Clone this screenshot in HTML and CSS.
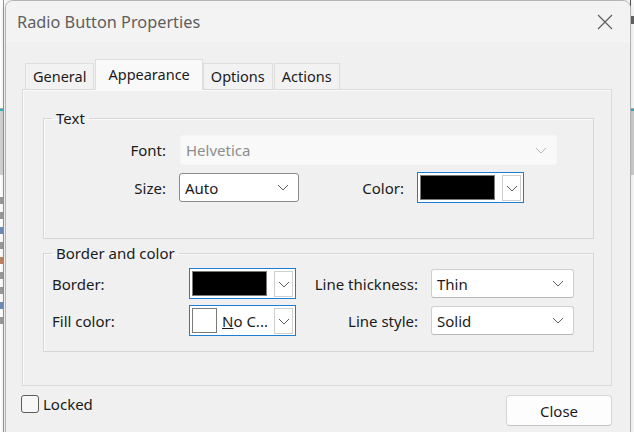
FILE: index.html
```html
<!DOCTYPE html>
<html lang="en">
  <head>
    <meta charset="UTF-8" />
    <meta name="viewport" content="width=device-width, initial-scale=1.0" />
    <title>Radio Button Properties</title>
    <link rel="stylesheet" href="styles.css">
  </head>
  <body>
    <!-- 背后的应用窗口，只露出两条边 -->
    <div class="desk">
      <div class="desk-left">
        <div class="desk-band"></div>
        <div class="desk-bits">
          <i></i><i></i><i class="blue"></i><i></i><i class="red"></i><i></i><i></i><i class="blue"></i><i></i>
        </div>
      </div>
      <div class="desk-right">
        <i class="desk-p"></i>
        <div class="desk-band"></div>
      </div>
    </div>

    <div class="dialog">
      <div class="titlebar">
        <span class="title">Radio Button Properties</span>
        <button class="close-x" aria-label="Close">
          <svg width="16" height="16" viewBox="0 0 16 16"><path d="M1 1L15 15M15 1L1 15" stroke="#5a5a5a" stroke-width="1.1" fill="none"/></svg>
        </button>
      </div>

      <div class="body">
        <div class="tabs">
          <div class="tab">General</div>
          <div class="tab active">Appearance</div>
          <div class="tab">Options</div>
          <div class="tab">Actions</div>
        </div>

        <div class="panel">
          <fieldset class="group group-text">
            <legend>Text</legend>
            <div class="text-grid">
              <span class="lbl right">Font:</span>
              <div class="select disabled wide">
                <span>Helvetica</span>
                <svg class="chev" width="12" height="7" viewBox="0 0 12 7"><polyline points="1,1 6,6 11,1" /></svg>
              </div>

              <span class="lbl right">Size:</span>
              <div class="select dark">
                <span>Auto</span>
                <svg class="chev" width="12" height="7" viewBox="0 0 12 7"><polyline points="1,1 6,6 11,1" /></svg>
              </div>
              <span class="lbl right">Color:</span>
              <div class="swatch">
                <span class="swatch-color"></span>
                <span class="swatch-drop">
                  <svg class="chev" width="12" height="7" viewBox="0 0 12 7"><polyline points="1,1 6,6 11,1" /></svg>
                </span>
              </div>
            </div>
          </fieldset>

          <fieldset class="group group-border">
            <legend>Border and color</legend>
            <div class="border-grid">
              <span class="lbl">Border:</span>
              <div class="swatch">
                <span class="swatch-color"></span>
                <span class="swatch-drop">
                  <svg class="chev" width="12" height="7" viewBox="0 0 12 7"><polyline points="1,1 6,6 11,1" /></svg>
                </span>
              </div>
              <span class="lbl right">Line thickness:</span>
              <div class="select">
                <span>Thin</span>
                <svg class="chev" width="12" height="7" viewBox="0 0 12 7"><polyline points="1,1 6,6 11,1" /></svg>
              </div>

              <span class="lbl">Fill color:</span>
              <div class="swatch">
                <span class="swatch-none"></span>
                <span class="swatch-text"><u>N</u>o C...</span>
                <span class="swatch-drop">
                  <svg class="chev" width="12" height="7" viewBox="0 0 12 7"><polyline points="1,1 6,6 11,1" /></svg>
                </span>
              </div>
              <span class="lbl right">Line style:</span>
              <div class="select">
                <span>Solid</span>
                <svg class="chev" width="12" height="7" viewBox="0 0 12 7"><polyline points="1,1 6,6 11,1" /></svg>
              </div>
            </div>
          </fieldset>
        </div>

        <div class="footer">
          <label class="check"><span class="box"></span>Locked</label>
          <button class="btn">Close</button>
        </div>
      </div>
    </div>
  </body>
</html>
```

FILE: styles.css
```css
body {
  margin: 0;
  width: 634px;
  height: 432px;
  overflow: hidden;
  position: relative;
  background-color: #ffffff;
  font-family: "Noto Sans", "Open Sans", sans-serif;
  font-size: 15px;
  color: #1b1b1b;
}

/* 背景窗口 */
.desk {
  display: flex;
  justify-content: space-between;
  height: 432px;
}
.desk-left,
.desk-right {
  height: 100%;
  overflow: hidden;
}
.desk-left {
  width: 3px;
  border-right: 1px solid #9a9a9a;
}
.desk-band {
  height: 66px;
  margin-top: 108px;
  background-color: #d2d2d2;
  border-top: 1px solid #b0b0b0;
  box-shadow: inset 0 25px 0 -23px #2bb5c0;
}
.desk-bits {
  display: flex;
  flex-direction: column;
  gap: 8px;
  margin-top: 22px;
}
.desk-bits i {
  display: block;
  width: 3px;
  height: 7px;
  background-color: #9a9a9a;
}
.desk-bits i.blue {
  background-color: #6f8cba;
}
.desk-bits i.red {
  background-color: #c08462;
}
.desk-right {
  width: 3px;
  border-left: 1px solid #555;
}
.desk-p {
  display: block;
  width: 3px;
  height: 8px;
  margin-top: 16px;
  background-color: #666;
}
.desk-right .desk-band {
  margin-top: 84px;
}

/* 对话框 */
.dialog {
  position: absolute;
  left: 5px;
  top: 0;
  width: 624px;
  height: 450px;
  background-color: #f0f0f0;
  border: 1px solid #b4b4b4;
  border-radius: 8px 8px 0 0;
  box-shadow: 0 0 6px rgba(0, 0, 0, 0.18);
  overflow: hidden;
}

.titlebar {
  height: 42px;
  display: flex;
  align-items: center;
  padding-left: 11px;
  background-color: #f3f3f3;
}
.title {
  font-size: 16.3px;
  color: #5e5e5e;
}
.close-x {
  margin-left: auto;
  width: 50px;
  height: 42px;
  border: 0;
  padding: 0;
  background: none;
  display: flex;
  align-items: center;
  justify-content: center;
}

.body {
  padding: 17px 18px 0 16px;
}

/* 选项卡 */
.tabs {
  display: flex;
  align-items: flex-end;
  height: 29px;
  padding-left: 3px;
  font-size: 14.5px;
}
.tab {
  height: 25px;
  line-height: 25px;
  padding: 0 7px;
  margin-right: 1px;
  background-color: #f2f2f2;
  border: 1px solid #dedede;
  border-bottom: 0;
}
.tab.active {
  height: 30px;
  line-height: 28px;
  padding: 0 12px;
  margin-bottom: -1px;
  margin-right: 0;
  background-color: #f9f9f9;
  position: relative;
  z-index: 1;
}

.panel {
  border: 1px solid #dadada;
  box-shadow: inset 1px 1px 0 #fbfbfb;
  padding: 19px 17px 33px 20px;
}

/* 分组框 */
.group {
  margin: 0;
  border: 1px solid #d6d6d6;
  box-shadow: inset 1px 1px 0 #fbfbfb;
  padding: 9px 8px 35px;
}
.group legend {
  padding: 0 4px;
  line-height: 18px;
}
.group-border {
  margin-top: 5px;
  padding: 6px 8px 15px;
}

.text-grid {
  display: grid;
  grid-template-columns: 114px 120px 92px 140px;
  grid-template-rows: 28px 31px;
  column-gap: 13px;
  row-gap: 8px;
  align-items: center;
}
.border-grid {
  display: grid;
  grid-template-columns: 124px 107px 109px 143px;
  grid-template-rows: 31px 31px;
  column-gap: 13px;
  row-gap: 6px;
  align-items: center;
}

.lbl.right {
  text-align: right;
}

/* 下拉框 */
.select {
  height: 27px;
  display: flex;
  align-items: center;
  justify-content: space-between;
  padding: 0 9px 0 5px;
  background-color: #ffffff;
  border: 1px solid #cfcfcf;
  border-bottom-color: #b9b9b9;
  border-radius: 3px;
}
.select.dark {
  border-color: #8a8a8a;
}
.select.wide {
  grid-column: 2 / 5;
}
.select.disabled {
  margin-left: 1px;
  height: 28px;
  background-color: #f9f9f9;
  border-color: #f6f6f6;
  color: #8c8c8c;
}
.chev polyline {
  fill: none;
  stroke: #5f5f5f;
  stroke-width: 1;
}
.disabled .chev polyline {
  stroke: #b8b8b8;
}

/* 颜色按钮 */
.swatch {
  width: 107px;
  height: 31px;
  box-sizing: border-box;
  display: flex;
  align-items: center;
  gap: 7px;
  padding: 2px 2px 1px 2px;
  background-color: #ffffff;
  border: 1px solid #1a7fd4;
}
.swatch-color {
  flex: 1;
  align-self: stretch;
  margin-bottom: 1px;
  background-color: #000000;
  border: 1px solid #7a7a7a;
}
.swatch-none {
  width: 23px;
  align-self: stretch;
  margin-bottom: 1px;
  background-color: #ffffff;
  border: 1px solid #7a7a7a;
  margin-right: -2px;
}
.swatch-text {
  flex: 1;
  white-space: nowrap;
  overflow: hidden;
}
.swatch-drop {
  width: 17px;
  flex: none;
  align-self: stretch;
  display: flex;
  align-items: center;
  justify-content: center;
  border: 1px solid #cfcfcf;
}

/* 底部 */
.footer {
  display: flex;
  justify-content: space-between;
  align-items: flex-start;
  margin-top: 9px;
}
.check {
  display: flex;
  align-items: center;
  gap: 4px;
  margin-left: -1px;
  height: 18px;
}
.box {
  width: 16px;
  height: 16px;
  border: 1px solid #5c5c5c;
  border-radius: 3px;
  background-color: #f7f7f7;
}
.btn {
  width: 106px;
  height: 31px;
  font-family: inherit;
  font-size: 15px;
  color: #1b1b1b;
  background-color: #fdfdfd;
  border: 1px solid #d5d5d5;
  border-bottom-color: #c2c2c2;
  border-radius: 4px;
}
```
